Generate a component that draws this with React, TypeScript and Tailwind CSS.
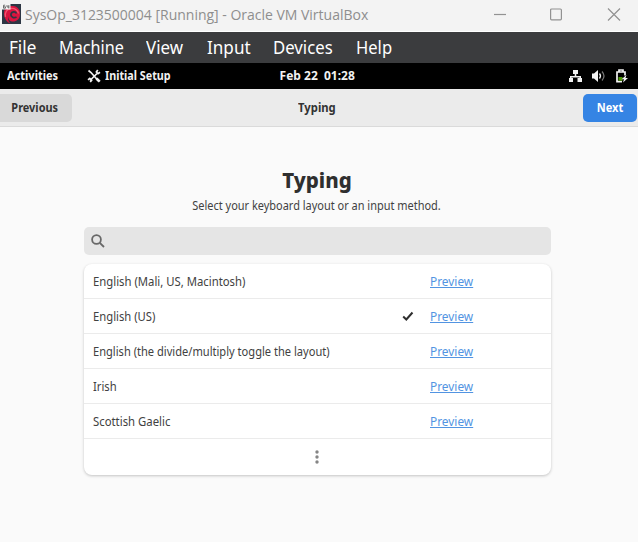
import type { ReactNode } from 'react';

type Layout = { name: string; scale: string; selected?: boolean };

const layouts: Layout[] = [
  { name: 'English (Mali, US, Macintosh)', scale: 'scale-x-[.905]' },
  { name: 'English (US)', scale: 'scale-x-[.9]', selected: true },
  { name: 'English (the divide/multiply toggle the layout)', scale: 'scale-x-[.888]' },
  { name: 'Irish', scale: 'scale-x-[.9]' },
  { name: 'Scottish Gaelic', scale: 'scale-x-[.907]' },
];

function AppIcon() {
  return (
    <svg width="19" height="20" viewBox="0 0 19 20" className="shrink-0">
      <rect width="19" height="20" fill="#2d3644" />
      <path d="M2 9C2 4 6 1.500 11 2C16.500 2.500 18.500 7 18 11C17.500 15.500 14 18 10 17.500C7 17 6 14 6.500 12C5.500 15 6.500 18.500 9 19.500C4.500 18.500 2 14 2 9Z" fill="#d9143f" />
      <path d="M14.500 9.500C13.500 7 9.500 7.500 9 10C8.500 13 12 14.500 14.500 13" fill="none" stroke="#2d3644" strokeWidth="1.700" />
      <path d="M3.500 13C2.500 8 5 5 9 4.500C13 4 16 6.500 16.500 9.500" fill="none" stroke="#f3556f" strokeWidth="1.300" />
      <rect width="8.500" height="5.500" fill="#f5f5f5" />
      <path d="M3.200 1.200H1.500V4.200H3.500V2.800H1.500M5 1V3H7.200M6.800 1V4.500" fill="none" stroke="#555" strokeWidth=".8" />
    </svg>
  );
}

function TitleBar() {
  return (
    <header className="flex h-8 items-center border-b border-white bg-[#f3f3f3] pl-0.5 pb-[3px] font-['Open_Sans',sans-serif] text-[#8e8e8e]">
      <AppIcon />
      <span className="ml-1 whitespace-pre text-[14px] tracking-[-0.01px]">SysOp_3123500004 [Running] - Oracle VM VirtualBox</span>
      <svg className="ml-auto mr-[17px]" width="128" height="14" viewBox="0 0 128 14" fill="none" stroke="#929292" strokeWidth="1.200">
        <path d="M1 7.500H13" />
        <rect x="57.600" y="2" width="10.800" height="10.800" rx="1" />
        <path d="M115 1.500L127 13.500M127 1.500L115 13.500" />
      </svg>
    </header>
  );
}

function MenuItem({ children, width, scale }: { children: ReactNode; width: string; scale: string }) {
  return (
    <span className={`shrink-0 whitespace-nowrap ${width}`}>
      <span className={`inline-block origin-left ${scale}`}>{children}</span>
    </span>
  );
}

function MenuBar() {
  return (
    <nav className="flex h-[31px] items-center bg-[#3b3c3e] pl-[9px] text-[18px] text-white">
      <MenuItem width="w-[50px]" scale="scale-x-[.95]">File</MenuItem>
      <MenuItem width="w-[87px]" scale="scale-x-[.9]">Machine</MenuItem>
      <MenuItem width="w-[61px]" scale="scale-x-[.94]">View</MenuItem>
      <MenuItem width="w-[66px]" scale="scale-x-[.95]">Input</MenuItem>
      <MenuItem width="w-[83px]" scale="scale-x-[.93]">Devices</MenuItem>
      <MenuItem width="w-[50px]" scale="scale-x-[.92]">Help</MenuItem>
    </nav>
  );
}

function SetupIcon() {
  return (
    <svg className="mr-1 shrink-0" width="14" height="14" viewBox="0 0 14 14" fill="none" stroke="#f2f2f2">
      <path d="M1.500 1.500L4 3.500L11.500 12M3 11.500L10 4.500" strokeWidth="1.700" />
      <path d="M13 3.200L11 4.600L9.400 3L10.800 1M1 10.800L2.800 9.400L4.600 11.200L3.200 13" strokeWidth="1.700" />
      <path d="M9.500 9.500L12.700 12.700" strokeWidth="2.600" />
    </svg>
  );
}

function StatusIcons() {
  return (
    <svg width="60" height="14" viewBox="0 0 60 14" fill="#f2f2f2">
      <path d="M5 1h5v4H8.300v2h4.700v2h1v4H9.500V9H11.500V8.500H3.500V9H5v4H1V9h1V7h4.700V5H5z" />
      <path d="M24 4.500h2l4-3.500v12l-4-3.500h-2z" />
      <path d="M31.500 4.500Q33.500 7 31.500 9.500" fill="none" stroke="#f2f2f2" strokeWidth="1.300" />
      <path d="M34 2.500Q38 7 34 11.500" fill="none" stroke="#777" strokeWidth="1.200" />
      <path d="M57 6.500V3H49V12.600H54M51 2.500V1H55V2.500" fill="none" stroke="#f2f2f2" strokeWidth="1.700" />
      <path d="M50.500 8h4v3.700h-4z" fill="#4e9a06" />
      <path d="M58.500 6L53.500 10.200h2.500L55 13.500L60 9h-2.500z" />
    </svg>
  );
}

function TopBar() {
  return (
    <div className="grid h-[26px] grid-cols-[1fr_auto_1fr] items-center bg-black text-[12.500px] font-bold text-[#f2f2f2]">
      <div className="flex items-center pl-[7px]">
        <span className="w-20"><span className="inline-block origin-left scale-x-[.88]">Activities</span></span>
        <SetupIcon />
        <span className="origin-left scale-x-[.862]">Initial Setup</span>
      </div>
      <span className="mr-[3px] whitespace-pre scale-x-[.96]">Feb 22  01:28</span>
      <div className="flex justify-end pr-[10px]"><StatusIcons /></div>
    </div>
  );
}

function HeaderBar() {
  return (
    <div className="grid h-[38px] grid-cols-[1fr_auto_1fr] items-center border-b border-[#dadada] bg-[#ebebeb] text-[12.500px] font-bold text-[#333]">
      <button className="h-7 w-[72px] rounded-r-[5px] bg-[#d9d9d9] pr-[3px] pt-[2px]"><span className="inline-block scale-x-[.875]">Previous</span></button>
      <span className="mr-1 scale-x-[.9] pt-[2px]">Typing</span>
      <button className="mr-[1.500px] h-7 w-[53.500px] justify-self-end rounded-[5px] bg-[#3584e4] pt-[2px] text-white"><span className="inline-block scale-x-[.88]">Next</span></button>
    </div>
  );
}

function LayoutRow({ layout }: { layout: Layout }) {
  return (
    <li className="flex h-[35px] items-center border-b border-[#ebebeb] pl-[9.500px] pt-[2px]">
      <span className="w-[309px] whitespace-nowrap"><span className={`inline-block origin-left ${layout.scale}`}>{layout.name}</span></span>
      <span className="w-[28px]">
        {layout.selected && (
          <svg width="12" height="12" viewBox="0 0 12 12" fill="none" stroke="#2e2e2e" strokeWidth="2">
            <path d="M1.200 5.500L4.300 8.500L10.500 1.500" />
          </svg>
        )}
      </span>
      <a className="origin-left scale-x-[.95] text-[#5294e2] underline">Preview</a>
    </li>
  );
}

export default function App() {
  return (
    <div className="flex h-[542px] w-[638px] flex-col overflow-hidden bg-[#fafafa] font-['Noto_Sans',sans-serif] text-[12.500px] text-[#414141]">
      <TitleBar />
      <MenuBar />
      <TopBar />
      <HeaderBar />
      <main className="flex flex-col pl-[83.500px] pr-[87.500px] pt-[38px]">
        <h1 className="-translate-x-[0.5px] scale-x-[.93] text-center text-[22px] font-extrabold leading-7 text-[#2f2f2f]">Typing</h1>
        <p className="mt-1 -translate-x-px scale-x-[.877] text-center leading-[18px]">Select your keyboard layout or an input method.</p>
        <div className="mt-3 flex h-7 items-center rounded-[5px] bg-[#e5e5e5] pl-[7px]">
          <svg width="14" height="14" viewBox="0 0 14 14" fill="none" stroke="#686868" strokeWidth="1.800">
            <circle cx="5.500" cy="5.500" r="4.400" />
            <path d="M8.800 8.800L13 13" />
          </svg>
        </div>
        <ul className="mt-[9px] h-[211px] rounded-[8px] bg-white shadow-[0_1px_3px_rgba(0,0,0,0.22)]">
          {layouts.map((layout) => <LayoutRow key={layout.name} layout={layout} />)}
          <li className="flex h-[36px] items-center justify-center">
            <svg width="4" height="14" viewBox="0 0 4 14" fill="#858585">
              <circle cx="2" cy="2" r="1.700" /><circle cx="2" cy="7" r="1.700" /><circle cx="2" cy="12" r="1.700" />
            </svg>
          </li>
        </ul>
      </main>
    </div>
  );
}
